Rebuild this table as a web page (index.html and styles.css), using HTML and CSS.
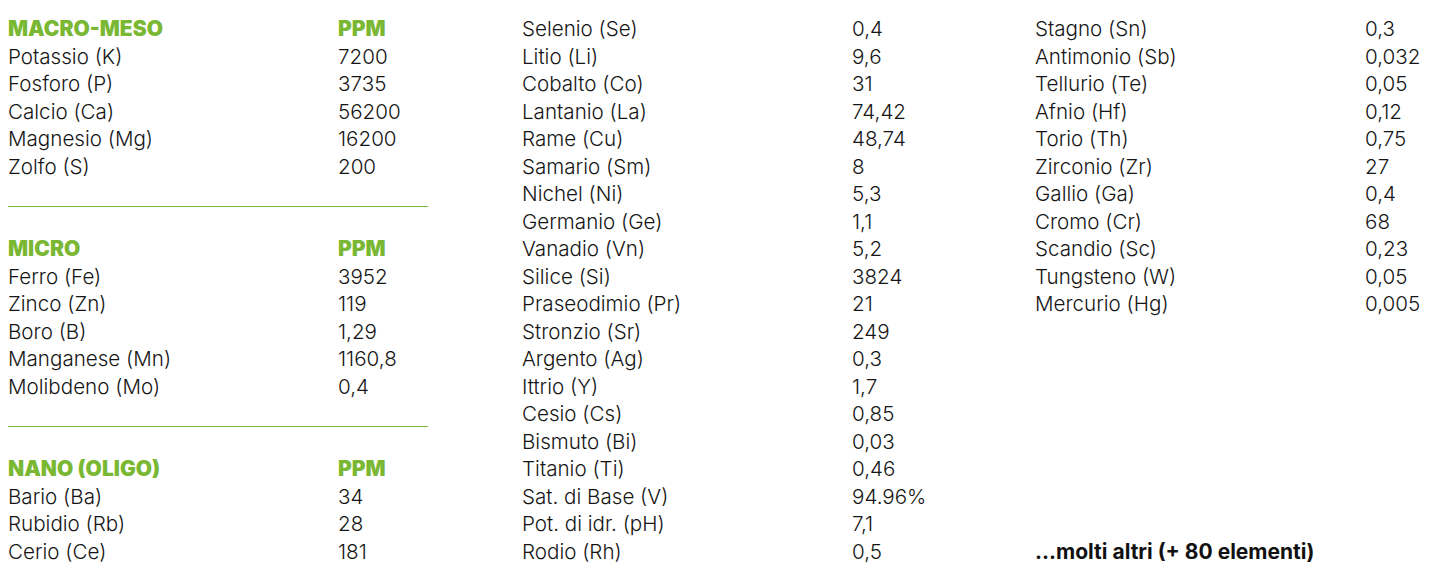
FILE: index.html
```html
<!DOCTYPE html>
<html lang="it">
<head>
<meta charset="utf-8">
<link rel="stylesheet" href="styles.css">
</head>
<body>
<div class="sheet">
  <div class="col">
    <div class="row head"><span>MACRO-MESO</span><span>PPM</span></div>
    <div class="row"><span>Potassio (K)</span><span>7200</span></div>
    <div class="row"><span>Fosforo (P)</span><span>3735</span></div>
    <div class="row"><span>Calcio (Ca)</span><span>56200</span></div>
    <div class="row"><span>Magnesio (Mg)</span><span>16200</span></div>
    <div class="row"><span>Zolfo (S)</span><span>200</span></div>
    <div class="rule"></div>
    <div class="row head"><span>MICRO</span><span>PPM</span></div>
    <div class="row"><span>Ferro (Fe)</span><span>3952</span></div>
    <div class="row"><span>Zinco (Zn)</span><span>119</span></div>
    <div class="row"><span>Boro (B)</span><span>1,29</span></div>
    <div class="row"><span>Manganese (Mn)</span><span>1160,8</span></div>
    <div class="row"><span>Molibdeno (Mo)</span><span>0,4</span></div>
    <div class="rule"></div>
    <div class="row head"><span>NANO (OLIGO)</span><span>PPM</span></div>
    <div class="row"><span>Bario (Ba)</span><span>34</span></div>
    <div class="row"><span>Rubidio (Rb)</span><span>28</span></div>
    <div class="row"><span>Cerio (Ce)</span><span>181</span></div>
  </div>
  <div class="col">
    <div class="row"><span>Selenio (Se)</span><span>0,4</span></div>
    <div class="row"><span>Litio (Li)</span><span>9,6</span></div>
    <div class="row"><span>Cobalto (Co)</span><span>31</span></div>
    <div class="row"><span>Lantanio (La)</span><span>74,42</span></div>
    <div class="row"><span>Rame (Cu)</span><span>48,74</span></div>
    <div class="row"><span>Samario (Sm)</span><span>8</span></div>
    <div class="row"><span>Nichel (Ni)</span><span>5,3</span></div>
    <div class="row"><span>Germanio (Ge)</span><span>1,1</span></div>
    <div class="row"><span>Vanadio (Vn)</span><span>5,2</span></div>
    <div class="row"><span>Silice (Si)</span><span>3824</span></div>
    <div class="row"><span>Praseodimio (Pr)</span><span>21</span></div>
    <div class="row"><span>Stronzio (Sr)</span><span>249</span></div>
    <div class="row"><span>Argento (Ag)</span><span>0,3</span></div>
    <div class="row"><span>Ittrio (Y)</span><span>1,7</span></div>
    <div class="row"><span>Cesio (Cs)</span><span>0,85</span></div>
    <div class="row"><span>Bismuto (Bi)</span><span>0,03</span></div>
    <div class="row"><span>Titanio (Ti)</span><span>0,46</span></div>
    <div class="row"><span>Sat. di Base (V)</span><span>94.96%</span></div>
    <div class="row"><span>Pot. di idr. (pH)</span><span>7,1</span></div>
    <div class="row"><span>Rodio (Rh)</span><span>0,5</span></div>
  </div>
  <div class="col">
    <div class="row"><span>Stagno (Sn)</span><span>0,3</span></div>
    <div class="row"><span>Antimonio (Sb)</span><span>0,032</span></div>
    <div class="row"><span>Tellurio (Te)</span><span>0,05</span></div>
    <div class="row"><span>Afnio (Hf)</span><span>0,12</span></div>
    <div class="row"><span>Torio (Th)</span><span>0,75</span></div>
    <div class="row"><span>Zirconio (Zr)</span><span>27</span></div>
    <div class="row"><span>Gallio (Ga)</span><span>0,4</span></div>
    <div class="row"><span>Cromo (Cr)</span><span>68</span></div>
    <div class="row"><span>Scandio (Sc)</span><span>0,23</span></div>
    <div class="row"><span>Tungsteno (W)</span><span>0,05</span></div>
    <div class="row"><span>Mercurio (Hg)</span><span>0,005</span></div>
    <div class="more">...molti altri (+ 80 elementi)</div>
  </div>
</div>
</body>
</html>
```
FILE: styles.css
```css
html, body {
  margin: 0;
  padding: 0;
  background: #ffffff;
}
body {
  font-family: "Inter", "Liberation Sans", sans-serif;
  font-size: 20.6px;
  font-weight: 300;
  color: #151515;
}
.sheet {
  display: grid;
  grid-template-columns: 514px 513px 406px;
  padding: 15px 0 0 8px;
}
.col {
  display: flex;
  flex-direction: column;
}
.row {
  display: grid;
  grid-template-columns: 330px auto;
  height: 27.5px;
  line-height: 27.5px;
  white-space: nowrap;
}
.head {
  color: #7ab833;
  font-weight: 900;
  font-size: 21px;
}
.rule {
  width: 420px;
  height: 26px;
  margin-bottom: 28px;
  border-bottom: 1px solid #7cbb36;
}
.more {
  margin-top: auto;
  height: 27.5px;
  line-height: 27.5px;
  font-weight: 700;
  font-size: 21px;
  color: #111;
}
```
